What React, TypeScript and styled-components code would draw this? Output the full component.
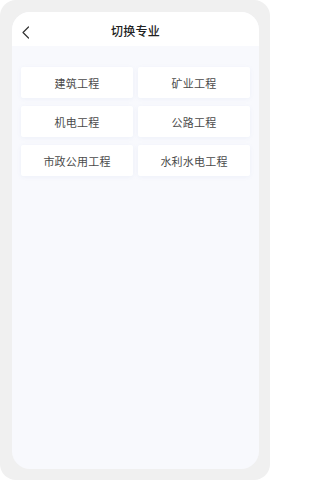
import React from 'react'
import styled, { createGlobalStyle } from 'styled-components'

const GlobalStyle = createGlobalStyle`
  html, body {
    margin: 0;
    padding: 0;
    background: #ffffff;
    font-family: "Noto Sans CJK SC", "Noto Sans", sans-serif;
  }
`;

const Frame = styled.div`
  width: 270px;
  height: 480px;
  box-sizing: border-box;
  padding: 12px 11px 11px 12px;
  background: #f0f0f0;
  border-radius: 16px;
  display: flex;
`;

const Screen = styled.div`
  flex: 1;
  display: flex;
  flex-direction: column;
  background: #f8f9fd;
  border-radius: 18px;
  overflow: hidden;
`;

const TopBar = styled.header`
  position: relative;
  height: 34px;
  flex-shrink: 0;
  background: #ffffff;
  display: flex;
  align-items: center;
  justify-content: center;
  padding-top: 3px;
  box-sizing: border-box;
`;

const BackButton = styled.button`
  position: absolute;
  left: 6px;
  top: 12px;
  width: 14px;
  height: 16px;
  padding: 0;
  border: none;
  background: none;
  display: flex;
  align-items: center;
  justify-content: center;
`;

const Title = styled.h1`
  margin: 0;
  font-size: 12px;
  font-weight: 500;
  color: #222222;
  letter-spacing: 0.3px;
`;

const Grid = styled.div`
  display: grid;
  grid-template-columns: 1fr 1fr;
  column-gap: 5px;
  row-gap: 8px;
  padding: 21px 9px 0 9px;
`;

const MajorButton = styled.button<{ $active?: boolean }>`
  height: 31px;
  border: none;
  border-radius: 2px;
  background: #ffffff;
  box-shadow: 0 1px 4px rgba(120, 140, 200, 0.08);
  font-family: "Noto Sans CJK SC", "Noto Sans", sans-serif;
  font-size: 11px;
  letter-spacing: 0.2px;
  color: ${p => (p.$active ? '#2f6bff' : '#4a4a4a')};
  padding: 0;
`;

const majors = ['建筑工程', '矿业工程', '机电工程', '公路工程', '市政公用工程', '水利水电工程']

const App: React.FC = () => {
  return (
    <>
      <GlobalStyle />
      <Frame>
        <Screen>
          <TopBar>
            <BackButton aria-label="返回">
              <svg width="9" height="13" viewBox="0 0 9 13">
                <path d="M7.5 1 L2 6.5 L7.5 12" fill="none" stroke="#333" strokeWidth="1.2" strokeLinecap="round" strokeLinejoin="round" />
              </svg>
            </BackButton>
            <Title>切换专业</Title>
          </TopBar>
          <Grid>
            {majors.map(m => (
              <MajorButton key={m}>{m}</MajorButton>
            ))}
          </Grid>
        </Screen>
      </Frame>
    </>
  );
}

export default App;
